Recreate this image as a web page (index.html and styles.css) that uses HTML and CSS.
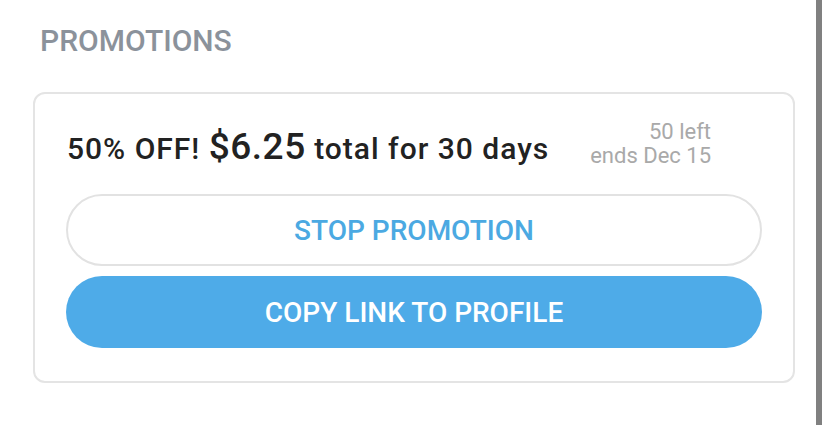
FILE: index.html
```html
<!DOCTYPE html>
<html lang="en">
	<head>
		<meta charset="UTF-8" />
		<meta name="viewport" content="width=device-width, initial-scale=1.0" />
		<title>Promotions</title>
		<link rel="stylesheet" href="styles.css">
	</head>
	<body>
		<div class="screen">
			<main class="content">
				<h2 class="section-title">PROMOTIONS</h2>

				<div class="promo-card">
					<div class="promo-head">
						<p class="promo-offer">
							50% OFF! <span class="promo-price">$6.25</span> total for 30 days
						</p>
						<div class="promo-meta">
							<span>50 left</span>
							<span>ends Dec 15</span>
						</div>
					</div>

					<button class="btn btn-outline">STOP PROMOTION</button>
					<button class="btn btn-primary">COPY LINK TO PROFILE</button>
				</div>
			</main>

			<div class="scroll-edge"></div>
		</div>
	</body>
</html>
```

FILE: styles.css
```css
body {
	margin: 0;
	background-color: #fff;
	font-family: Roboto, "Noto Sans", Arial, sans-serif;
}

.screen {
	display: flex;
	min-height: 425px;
}

.content {
	flex: 1;
	padding: 22px 21px 0 33px;
}

/* thin scroll indicator on the right edge */
.scroll-edge {
	width: 6px;
	margin-right: 6px;
	background-color: #808080;
}

.section-title {
	margin: 0 0 32px 7px;
	font-size: 30px;
	font-weight: 500;
	line-height: 38px;
	color: #8b929b;
}

.promo-card {
	display: flex;
	flex-direction: column;
	gap: 10px;
	padding: 26px 31px 33px;
	border: 2px solid #e4e4e4;
	border-radius: 12px;
}

.promo-head {
	display: flex;
	align-items: center;
	justify-content: space-between;
	padding: 0 51px 0 1px;
	margin-bottom: 16px;
}

.promo-offer {
	margin: 4px 0 0;
	font-size: 30px;
	font-weight: 500;
	letter-spacing: 1px;
	color: #222;
}

.promo-price {
	font-size: 37px;
	letter-spacing: 0.5px;
}

.promo-meta {
	display: flex;
	flex-direction: column;
	align-items: flex-end;
	font-size: 22px;
	line-height: 24px;
	color: #a9a9a9;
}

.btn {
	height: 72px;
	border-radius: 36px;
	font-family: inherit;
	font-size: 28px;
	font-weight: 500;
	cursor: pointer;
}

.btn-outline {
	background-color: #fff;
	border: 2px solid #e2e2e2;
	color: #4ba9e2;
}

.btn-primary {
	background-color: #4eabe8;
	border: none;
	color: #fff;
}
```
